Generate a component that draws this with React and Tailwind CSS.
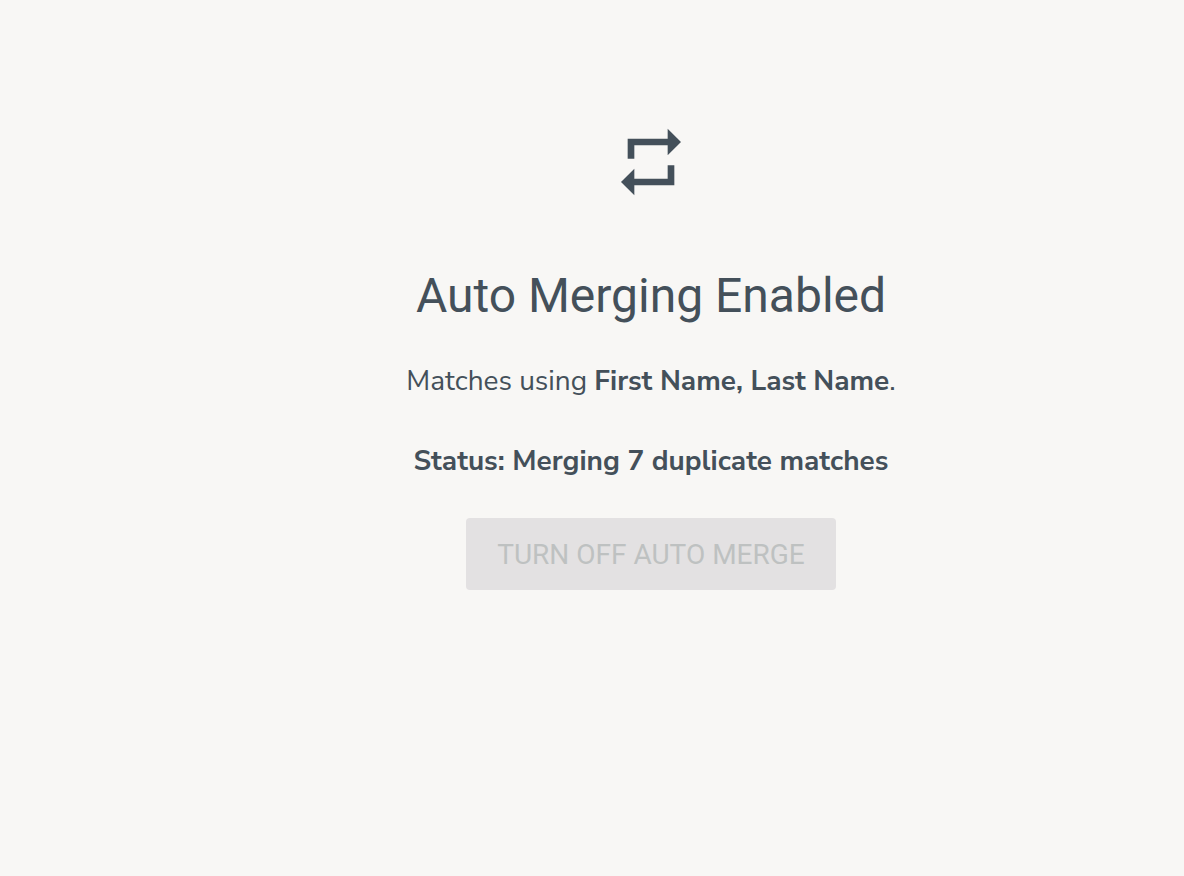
import React from "react";

const RepeatIcon = () => (
  <svg viewBox="0 0 24 24" className="w-20 h-20" fill="currentColor" aria-hidden="true">
    <path d="M7 7h10v3l4-4-4-4v3H5v6h2V7zm10 10H7v-3l-4 4 4 4v-3h12v-6h-2v4z" />
  </svg>
);

const AutoMergePage = () => {
  const fields = ["First Name", "Last Name"];
  const duplicates = 7;
  const merging = duplicates > 0;

  return (
    <main className="min-h-screen bg-[#f8f7f5] pl-[118px] pt-[122px] text-[#44505a]">
      <section className="flex flex-col items-center text-center font-['Nunito_Sans','Nunito','Open_Sans',sans-serif]">
        <RepeatIcon />
        <h1 className="mt-16 font-[Roboto,sans-serif] text-5xl leading-[60px]">Auto Merging Enabled</h1>
        <p className="mt-[35px] text-[28px] leading-10">
          Matches using <strong className="font-bold">{fields.join(", ")}</strong>.
        </p>
        <p className="mt-10 text-[28px] leading-10 font-bold">
          Status: Merging {duplicates} duplicate matches
        </p>
        <button
          type="button"
          disabled={merging}
          className="mt-[37px] h-[72px] px-[31px] pt-0.5 rounded bg-[#e3e1e2] font-[Roboto,sans-serif] text-[28px] text-[#bec1c1]"
        >
          TURN OFF AUTO MERGE
        </button>
      </section>
    </main>
  );
};

export default AutoMergePage;
